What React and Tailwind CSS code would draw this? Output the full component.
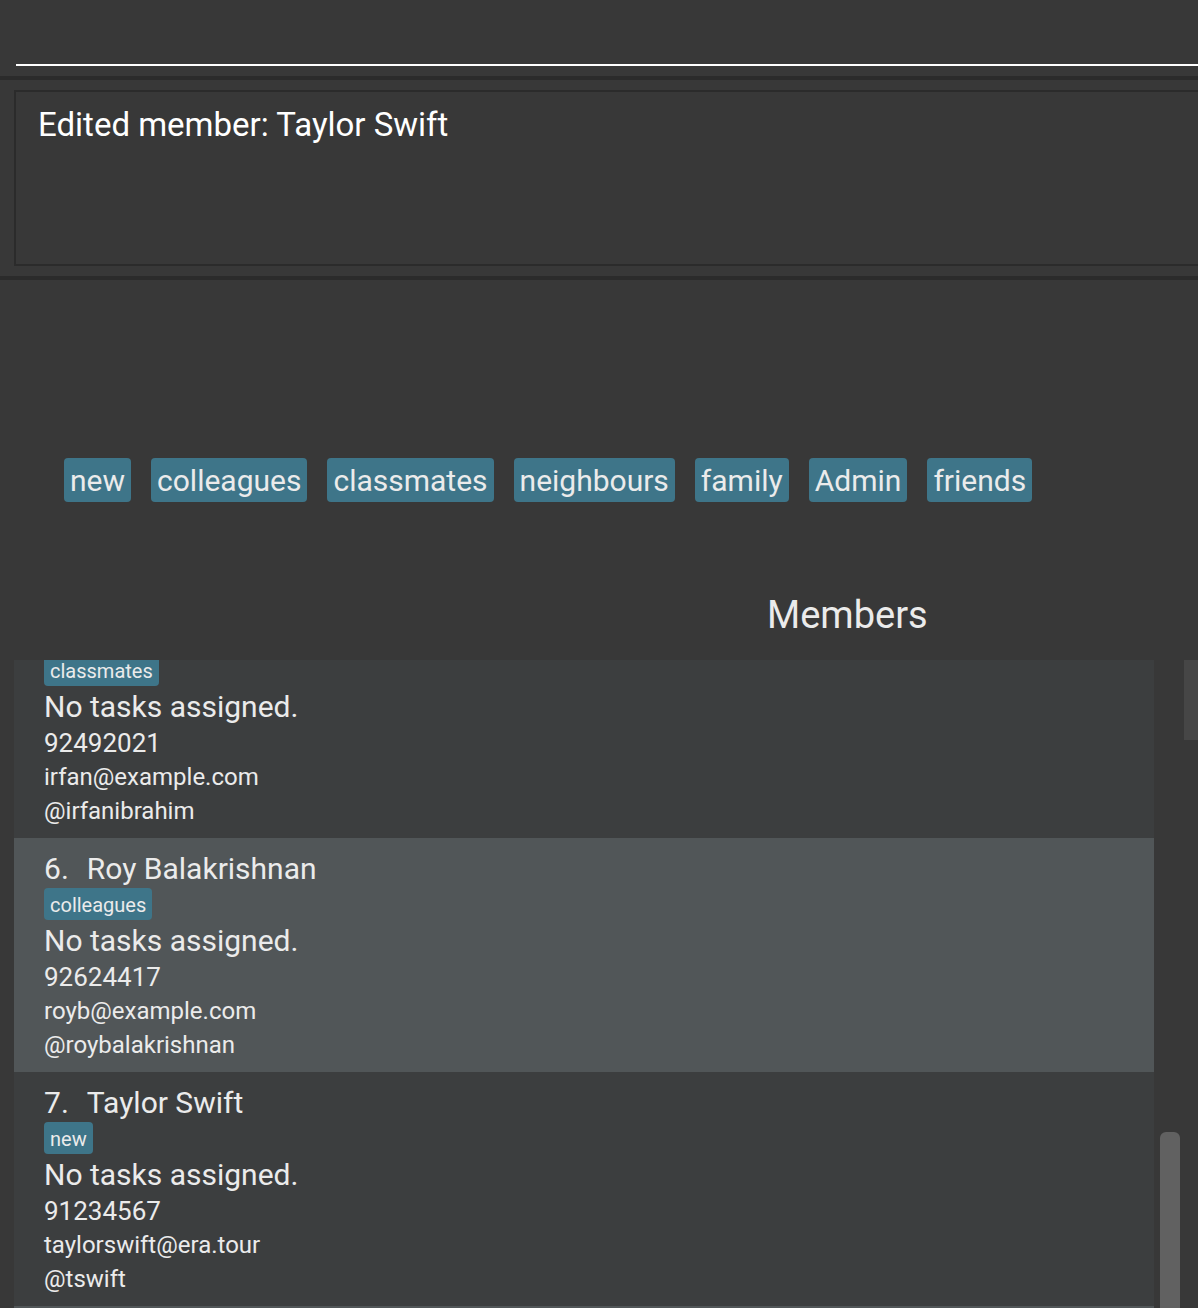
const tags = ['new', 'colleagues', 'classmates', 'neighbours', 'family', 'Admin', 'friends'];

const members = [
  { id: 5, name: 'Irfan Ibrahim', tag: 'classmates', phone: '92492021', email: 'irfan@example.com', handle: '@irfanibrahim' },
  { id: 6, name: 'Roy Balakrishnan', tag: 'colleagues', phone: '92624417', email: 'royb@example.com', handle: '@roybalakrishnan' },
  { id: 7, name: 'Taylor Swift', tag: 'new', phone: '91234567', email: 'taylorswift@era.tour', handle: '@tswift' },
];

function Member({ member, first }) {
  return (
    <li className={`px-[30px] pb-2.5 ${member.id % 2 === 0 ? 'bg-[#515658]' : 'bg-[#3c3e3f]'}`}>
      {!first && (
        <h3 className="flex h-[50px] items-end gap-[18px] text-[30px] leading-[38px]">
          <span>{member.id}.</span>
          <span>{member.name}</span>
        </h3>
      )}
      <div className="flex">
        <span className={first ? 'h-[26px] rounded-b bg-[#3e7589] px-1.5 text-[20px] leading-[22px]' : 'h-8 rounded bg-[#3e7589] px-1.5 text-[20px] leading-[34px]'}>
          {member.tag}
        </span>
      </div>
      <p className="text-[30px] leading-[42px]">No tasks assigned.</p>
      <div className="-mt-0.5 text-[24px] leading-[34px]">
        <p className="text-[26px]">{member.phone}</p>
        <p>{member.email}</p>
        <p>{member.handle}</p>
      </div>
    </li>
  );
}

export default function App() {
  return (
    <main className="flex h-screen flex-col overflow-hidden bg-[#383838] font-['Roboto',sans-serif] text-[#ebebeb]">
      <form className="h-20 border-b-4 border-[#2b2b2b] pl-4" onSubmit={(e) => e.preventDefault()}>
        <input aria-label="Command" className="block h-[66px] w-full border-b-2 border-white bg-transparent text-3xl outline-none" />
      </form>
      <section className="h-[200px] border-b-4 border-[#2b2b2b] pt-2.5 pl-3.5">
        <div className="h-44 border-2 border-r-0 border-[#2b2b2b] px-[22px] py-3 text-[33px] leading-[42px] text-white">Edited member: Taylor Swift</div>
      </section>
      <ul className="mt-[178px] flex gap-5 pl-16">
        {tags.map((tag) => (
          <li key={tag} className="h-11 rounded bg-[#3e7589] px-1.5 text-[30px] leading-[46px]">{tag}</li>
        ))}
      </ul>
      <h2 className="mt-[88px] pl-[767px] text-[38px] leading-[50px]">Members</h2>
      <div className="mt-5 flex min-h-0 flex-1 pl-3.5">
        <ul className="min-w-0 flex-1 overflow-hidden bg-[#515658]">
          {members.map((member, index) => (
            <Member key={member.id} member={member} first={index === 0} />
          ))}
        </ul>
        <div className="flex w-[30px] flex-col justify-end pr-1 pl-1.5">
          <div className="h-44 rounded-t-md bg-[#616161]" />
        </div>
        <div className="h-20 w-3.5 bg-[#464646]" />
      </div>
    </main>
  );
}
